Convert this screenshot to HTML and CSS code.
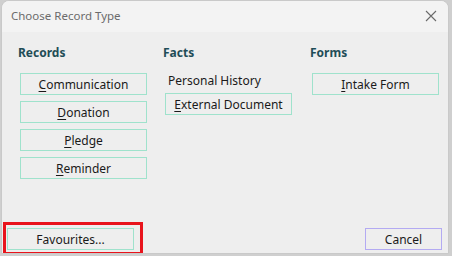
FILE: index.html
```html
<!DOCTYPE html>
<html lang="en">
<head>
    <meta charset="UTF-8">
    <title>Choose Record Type</title>
    <link rel="stylesheet" href="styles.css">
</head>
<body>
    <div class="window">
        <div class="titlebar">
            <span class="title">Choose Record Type</span>
            <svg class="close" width="12" height="12" viewBox="0 0 12 12">
                <path d="M1 1L11 11M11 1L1 11" stroke="#6a6a6a" stroke-width="1.1" fill="none"/>
            </svg>
        </div>
        <div class="content">
            <div class="columns">
                <div class="col">
                    <h2>Records</h2>
                    <button class="btn"><u>C</u>ommunication</button>
                    <button class="btn"><u>D</u>onation</button>
                    <button class="btn"><u>P</u>ledge</button>
                    <button class="btn"><u>R</u>eminder</button>
                </div>
                <div class="col">
                    <h2>Facts</h2>
                    <div class="label">Personal History</div>
                    <button class="btn"><u>E</u>xternal Document</button>
                </div>
                <div class="col">
                    <h2>Forms</h2>
                    <button class="btn"><u>I</u>ntake Form</button>
                </div>
            </div>
            <div class="footer">
                <button class="btn">Favourites...</button>
                <button class="btn cancel">Cancel</button>
            </div>
        </div>
        <div class="highlight"></div>
    </div>
</body>
</html>
```

FILE: styles.css
```css
:root {
    --window-bg: #eeeeee;
    --title-bg: #f3f3f3;
    --heading-color: #1f4d57;
    --text-color: #1a1a1a;
    --mint: #9fe2cc;
    --lilac: #b3aaf2;
}

body {
    margin: 0;
    background-color: #cfcfcf;
    font-family: 'Noto Sans', sans-serif;
    color: var(--text-color);
}

.window {
    position: relative;
    margin-left: 1px;
    width: 446px;
    height: 252px;
    background-color: var(--window-bg);
    border: 1px solid #c9c9c9;
    border-radius: 8px 8px 0 0;
    display: flex;
    flex-direction: column;
    overflow: hidden;
}

.titlebar {
    height: 31px;
    background-color: var(--title-bg);
    display: flex;
    align-items: center;
    justify-content: space-between;
    padding: 0 10px 2px 9px;
    box-sizing: border-box;
}

.title {
    font-size: 11.5px;
    color: #6b6b6b;
}

.close {
    margin-right: 1px;
}

.content {
    flex: 1;
    display: flex;
    flex-direction: column;
    justify-content: space-between;
    padding: 12px 0 3px 0;
}

.columns {
    display: grid;
    grid-template-columns: 145px 147px 1fr;
    padding-left: 16px;
}

.col {
    display: flex;
    flex-direction: column;
    align-items: flex-start;
    gap: 6px;
}

h2 {
    margin: 0 0 6px 0;
    font-size: 12px;
    font-weight: 700;
    color: var(--heading-color);
    line-height: 17px;
}

.label {
    font-size: 12px;
    line-height: 16px;
    margin: 0 0 -2px 5px;
}

.btn {
    width: 127px;
    height: 22px;
    margin-left: 2px;
    padding: 0;
    background-color: var(--window-bg);
    border: 1px solid var(--mint);
    font-family: 'Noto Sans', sans-serif;
    font-size: 12px;
    color: var(--text-color);
}

.btn u {
    text-underline-offset: 2px;
}

.footer {
    display: flex;
    justify-content: space-between;
    padding: 0 6px 0 5px;
}

.footer .btn {
    margin-left: 0;
}

.cancel {
    width: 77px;
    border-color: var(--lilac);
}

/* annotation box over the Favourites button */
.highlight {
    position: absolute;
    left: 1px;
    top: 221px;
    width: 134px;
    height: 27px;
    border: 3px solid #e8141c;
}
```
